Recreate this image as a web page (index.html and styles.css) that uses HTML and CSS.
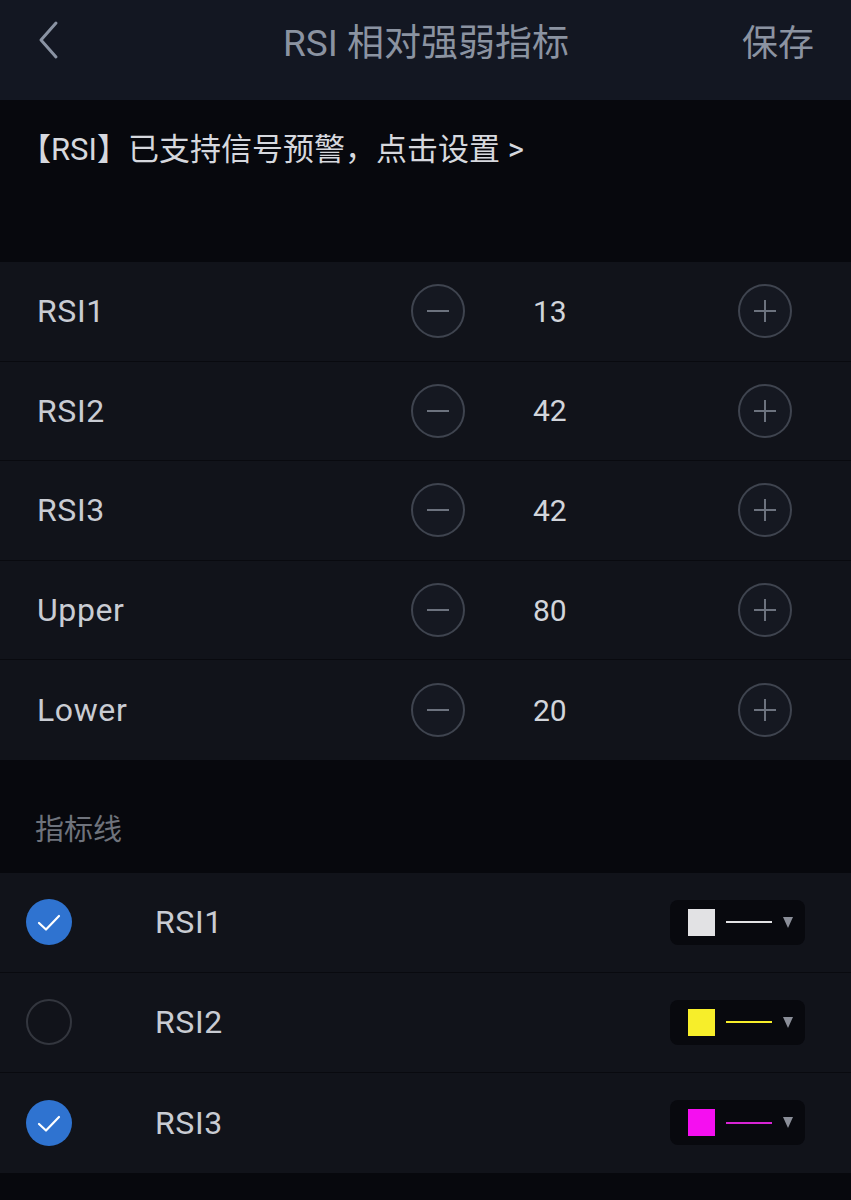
FILE: index.html
```html
<!DOCTYPE html>
<html lang="zh-CN">
<head>
    <meta charset="UTF-8">
    <meta name="viewport" content="width=device-width, initial-scale=1.0">
    <title>RSI 相对强弱指标</title>
    <link rel="stylesheet" href="styles.css">
</head>
<body>
    <div class="nav">
        <div class="nav-back">
            <svg width="22" height="40" viewBox="0 0 22 40">
                <polyline points="18,3 3,20 18,37" fill="none" stroke="#8a93a3" stroke-width="3" stroke-linecap="round" stroke-linejoin="round"/>
            </svg>
        </div>
        <div class="nav-title">RSI 相对强弱指标</div>
        <div class="nav-save">保存</div>
    </div>

    <div class="banner">【RSI】已支持信号预警，点击设置 &gt;</div>

    <section class="params">
        <div class="param-row">
            <div class="param-name">RSI1</div>
            <div class="step-btn minus"></div>
            <div class="param-value">13</div>
            <div class="step-btn plus"></div>
        </div>
        <div class="param-row">
            <div class="param-name">RSI2</div>
            <div class="step-btn minus"></div>
            <div class="param-value">42</div>
            <div class="step-btn plus"></div>
        </div>
        <div class="param-row">
            <div class="param-name">RSI3</div>
            <div class="step-btn minus"></div>
            <div class="param-value">42</div>
            <div class="step-btn plus"></div>
        </div>
        <div class="param-row">
            <div class="param-name">Upper</div>
            <div class="step-btn minus"></div>
            <div class="param-value">80</div>
            <div class="step-btn plus"></div>
        </div>
        <div class="param-row">
            <div class="param-name">Lower</div>
            <div class="step-btn minus"></div>
            <div class="param-value">20</div>
            <div class="step-btn plus"></div>
        </div>
    </section>

    <div class="section-title">指标线</div>

    <section class="lines">
        <div class="line-row">
            <div class="check checked">
                <svg width="46" height="46" viewBox="0 0 46 46"><polyline points="13,24 20,30.5 33,17" fill="none" stroke="#fff" stroke-width="2.2" stroke-linecap="round" stroke-linejoin="round"/></svg>
            </div>
            <div class="line-name">RSI1</div>
            <div class="picker">
                <span class="swatch white"></span>
                <span class="stroke white"></span>
                <span class="caret"></span>
            </div>
        </div>
        <div class="line-row">
            <div class="check"></div>
            <div class="line-name">RSI2</div>
            <div class="picker">
                <span class="swatch yellow"></span>
                <span class="stroke yellow"></span>
                <span class="caret"></span>
            </div>
        </div>
        <div class="line-row">
            <div class="check checked">
                <svg width="46" height="46" viewBox="0 0 46 46"><polyline points="13,24 20,30.5 33,17" fill="none" stroke="#fff" stroke-width="2.2" stroke-linecap="round" stroke-linejoin="round"/></svg>
            </div>
            <div class="line-name">RSI3</div>
            <div class="picker">
                <span class="swatch magenta"></span>
                <span class="stroke magenta"></span>
                <span class="caret"></span>
            </div>
        </div>
    </section>
</body>
</html>
```

FILE: styles.css
```css
html, body {
    margin: 0;
    padding: 0;
}

body {
    width: 851px;
    min-height: 1200px;
    background-color: #07080d;
    font-family: Roboto, "Noto Sans CJK SC", sans-serif;
    color: #c9ccd3;
}

.nav {
    height: 100px;
    background-color: #131722;
    display: grid;
    grid-template-columns: 1fr auto 1fr;
    align-items: center;
    padding: 0 37px 0 38px;
    box-sizing: border-box;
}

.nav-back {
    display: flex;
    align-items: center;
    padding-bottom: 20px;
}

.nav-title {
    font-size: 37px;
    color: #8b93a1;
    padding-bottom: 20px;
}

.nav-save {
    justify-self: end;
    font-size: 36px;
    color: #8b93a1;
    padding-bottom: 20px;
}

.banner {
    height: 162px;
    box-sizing: border-box;
    padding: 24px 0 0 20px;
    font-size: 31px;
    color: #d6d8de;
    background-color: #07080d;
}

.params, .lines {
    background-color: #11131a;
}

.param-row {
    height: 99.6px;
    display: flex;
    align-items: center;
    padding: 0 59px 0 37px;
    border-bottom: 1px solid #090a0f;
    box-sizing: border-box;
}

.param-row:last-child {
    border-bottom: none;
}

.param-name {
    width: 374px;
    font-size: 32px;
    letter-spacing: 0.6px;
    color: #c9ccd3;
}

.param-value {
    flex: 1;
    margin-left: 68px;
    font-size: 30px;
    color: #d2d5db;
}

.step-btn {
    position: relative;
    width: 54px;
    height: 54px;
    border: 2px solid #3f444f;
    border-radius: 50%;
    box-sizing: border-box;
    background-color: #151821;
}

.step-btn::before,
.step-btn::after {
    content: "";
    position: absolute;
    background-color: #6c727e;
}

.step-btn::before {
    left: 14px;
    right: 14px;
    top: 24px;
    height: 2px;
}

.plus::after {
    top: 14px;
    bottom: 14px;
    left: 24px;
    width: 2px;
}

.section-title {
    height: 113px;
    box-sizing: border-box;
    padding: 46px 0 0 35px;
    font-size: 29px;
    color: #6f737c;
}

.line-row {
    height: 100px;
    display: flex;
    align-items: center;
    padding: 0 46px 0 26px;
    border-bottom: 1px solid #090a0f;
    box-sizing: border-box;
}

.line-row:last-child {
    border-bottom: none;
}

.check {
    width: 46px;
    height: 46px;
    border: 2px solid #33363e;
    border-radius: 50%;
    box-sizing: border-box;
}

.check.checked {
    border: none;
    background-color: #2f73d0;
}

.check svg {
    display: block;
}

.line-name {
    flex: 1;
    margin-left: 83px;
    font-size: 32px;
    letter-spacing: 0.6px;
    color: #c9ccd3;
}

.picker {
    width: 135px;
    height: 45px;
    border-radius: 8px;
    background-color: #08090e;
    display: flex;
    align-items: center;
    padding-left: 18px;
    box-sizing: border-box;
}

.swatch {
    width: 27px;
    height: 27px;
}

.stroke {
    width: 46px;
    height: 2px;
    margin-left: 11px;
}

.swatch.white { background-color: #e2e2e4; }
.stroke.white { background-color: #e2e2e4; }
.swatch.yellow { background-color: #f7ee2a; }
.stroke.yellow { background-color: #f7ee2a; }
.swatch.magenta { background-color: #f50ff0; }
.stroke.magenta { background-color: #d824d4; }

.caret {
    margin-left: 11px;
    width: 0;
    height: 0;
    border-left: 5px solid transparent;
    border-right: 5px solid transparent;
    border-top: 11px solid #8a8e98;
}
```
